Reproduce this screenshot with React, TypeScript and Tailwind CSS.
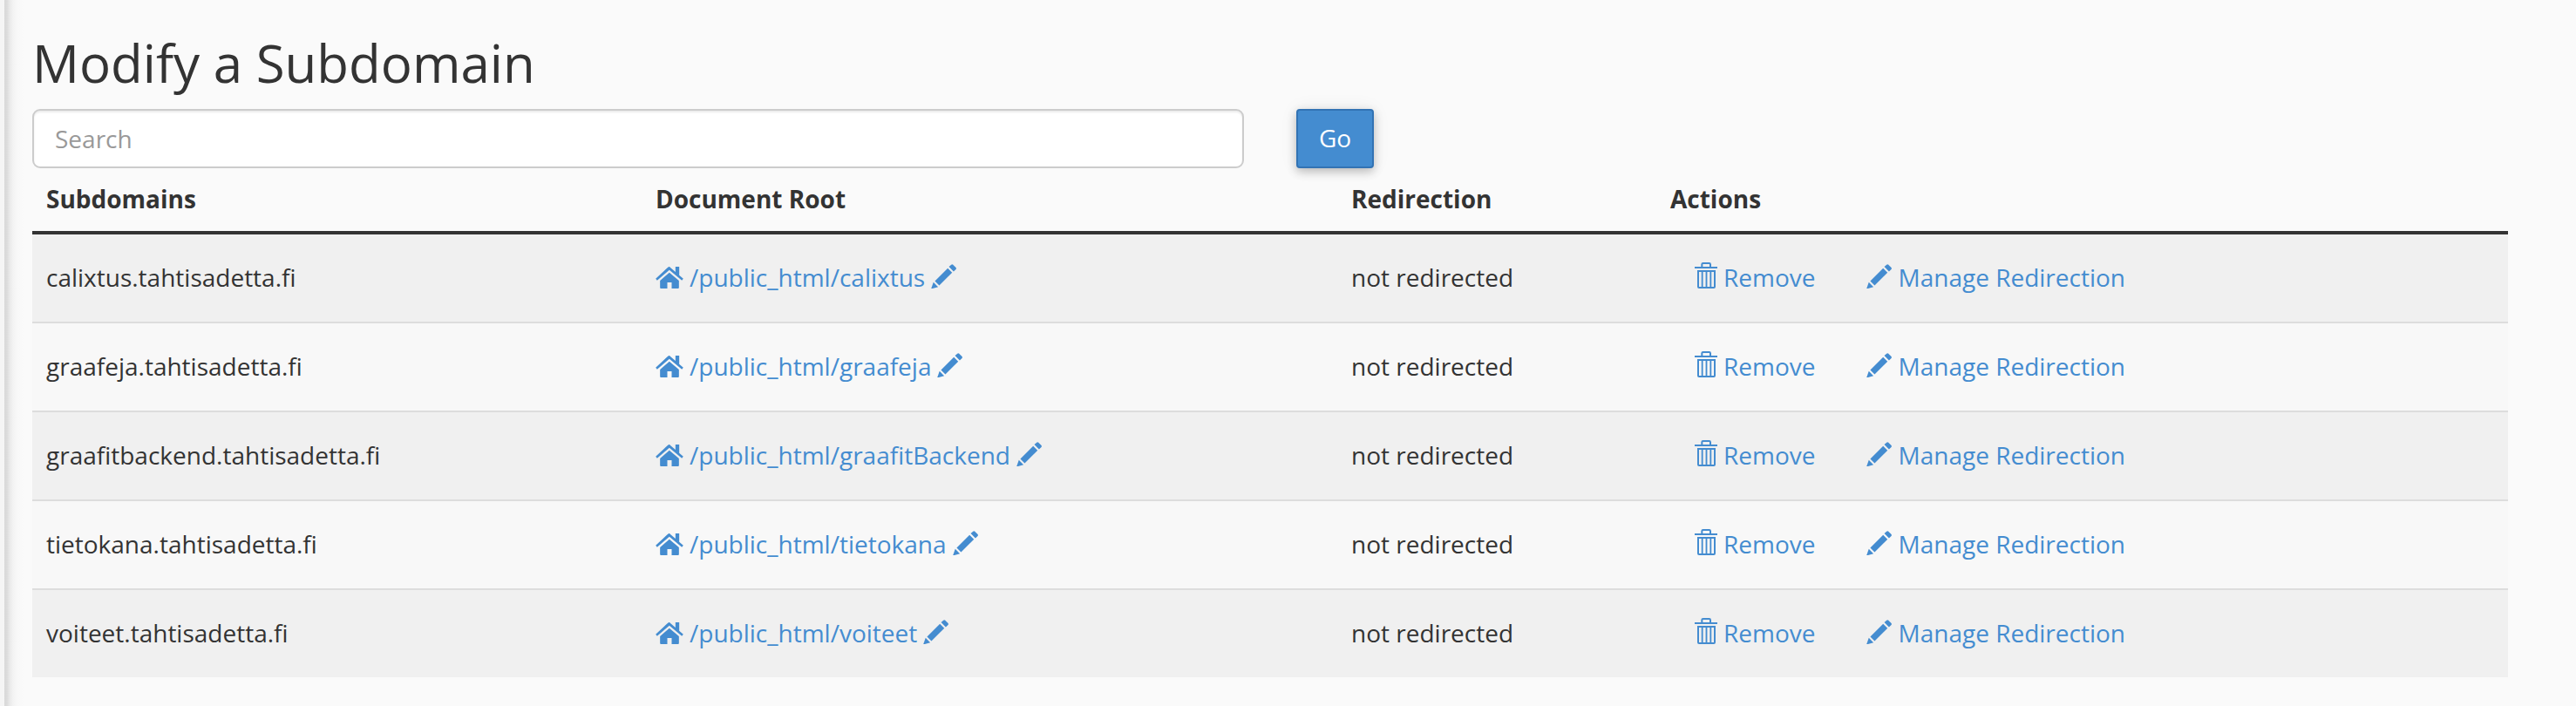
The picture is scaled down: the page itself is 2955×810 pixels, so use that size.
import React from "react";

const rows = ["calixtus", "graafeja", "graafitBackend", "tietokana", "voiteet"];

const cols = "grid grid-cols-[699px_798px_366px_977px]";

function HomeIcon() {
  return (
    <svg viewBox="0 0 95 75" className="-mt-[2px] h-[25px] w-[32px] shrink-0" fill="currentColor">
      <path d="M47 0 L68 18 V0 H81 V29 L95 41 L90 47 L47 11 L5 47 L0 41 L42 2 Q47 -2 51 2 Z" />
      <path d="M47 20 L80 48 V72 Q80 75 77 75 H55 V54 H40 V75 H18 Q15 75 15 72 V48 Z" />
    </svg>
  );
}

function PencilIcon() {
  return (
    <svg viewBox="0 0 86 85" className="-mt-[4px] h-[28.5px] w-[29px] shrink-0" fill="currentColor">
      <path d="M0 85 L8 62 L24 78 Z" />
      <path d="M13 58 L57 14 L72 29 L28 73 Z" />
      <path d="M61 9 L69 2 Q72 0 75 2 L85 12 Q87 15 85 18 L77 25 Z" />
    </svg>
  );
}

function TrashIcon() {
  return (
    <svg viewBox="0 0 78 90" className="-mt-[6px] h-[30px] w-[26px] shrink-0" fill="none" stroke="currentColor" strokeWidth="6">
      <path d="M25 17 V7 Q25 3 29 3 H50 Q54 3 54 7 V17" />
      <path d="M0 18 H78" />
      <path d="M12 30 H69 V84 Q69 87 66 87 H15 Q12 87 12 84 Z" />
      <path d="M26 30 V87 M40.5 30 V87 M55 30 V87" strokeWidth="5.5" />
    </svg>
  );
}

export default function App() {
  return (
    <div className="flex h-[810px] w-[2955px] overflow-hidden bg-[#fafafa] font-['Open_Sans',sans-serif] text-[28px] leading-[42px] text-[#333]">
      <div className="w-[5px] shrink-0 bg-[#f5f5f5]" />
      <div className="w-[22px] shrink-0 bg-[linear-gradient(to_right,#d9d9d9_0px,#dcdcdc_3px,#e9e9e9_6px,#f3f3f3_10px,#f8f8f8_15px,#fafafa_22px)]" />
      <main className="ml-[10px] w-[2840px] shrink-0">
        <h1 className="mt-[36px] h-[89px] text-[60px] leading-[72px]">Modify a Subdomain</h1>
        <div className="flex">
          <input
            aria-label="Search"
            placeholder="Search"
            className="h-[68px] w-[1390px] rounded-[9px] border-2 border-[#ccc] bg-white px-[24px] shadow-[inset_0_2px_2px_rgba(0,0,0,0.075)] placeholder:text-[#999]"
          />
          <button className="ml-[60px] h-[68px] w-[89px] rounded-[4px] border-2 border-[#3273b4] bg-[#448cd0] pb-[2px] text-white shadow-[0_4px_11px_rgba(0,0,0,0.24),0_0_22px_rgba(0,0,0,0.06)]">
            Go
          </button>
        </div>
        <div className={cols + " h-[76px] border-b-4 border-[#333] pl-4 pt-[14px] font-bold"}>
          <div>Subdomains</div>
          <div>Document Root</div>
          <div>Redirection</div>
          <div>Actions</div>
        </div>
        {rows.map((name, i) => (
          <div
            key={name}
            className={
              cols +
              " items-center overflow-hidden pl-4 " +
              (i === 0 ? "h-[100px] " : "h-[102px] border-t-2 border-[#ddd] ") +
              (i % 2 === 0 ? "bg-[#f0f0f0]" : "bg-[#f8f8f8]")
            }
          >
            <div className="-mt-[2px]">{name.toLowerCase()}.tahtisadetta.fi</div>
            <div className="flex items-center text-[#448cd0]">
              <HomeIcon />
              <span className="-mt-[2px] ml-[7px] mr-[7px]">/public_html/{name}</span>
              <PencilIcon />
            </div>
            <div className="-mt-[2px]">not redirected</div>
            <div className="flex items-center pl-[28px] text-[#448cd0]">
              <TrashIcon />
              <span className="-mt-[2px] ml-[7px] mr-[59px]">Remove</span>
              <PencilIcon />
              <span className="-mt-[2px] ml-[7px]">Manage Redirection</span>
            </div>
          </div>
        ))}
      </main>
    </div>
  );
}
